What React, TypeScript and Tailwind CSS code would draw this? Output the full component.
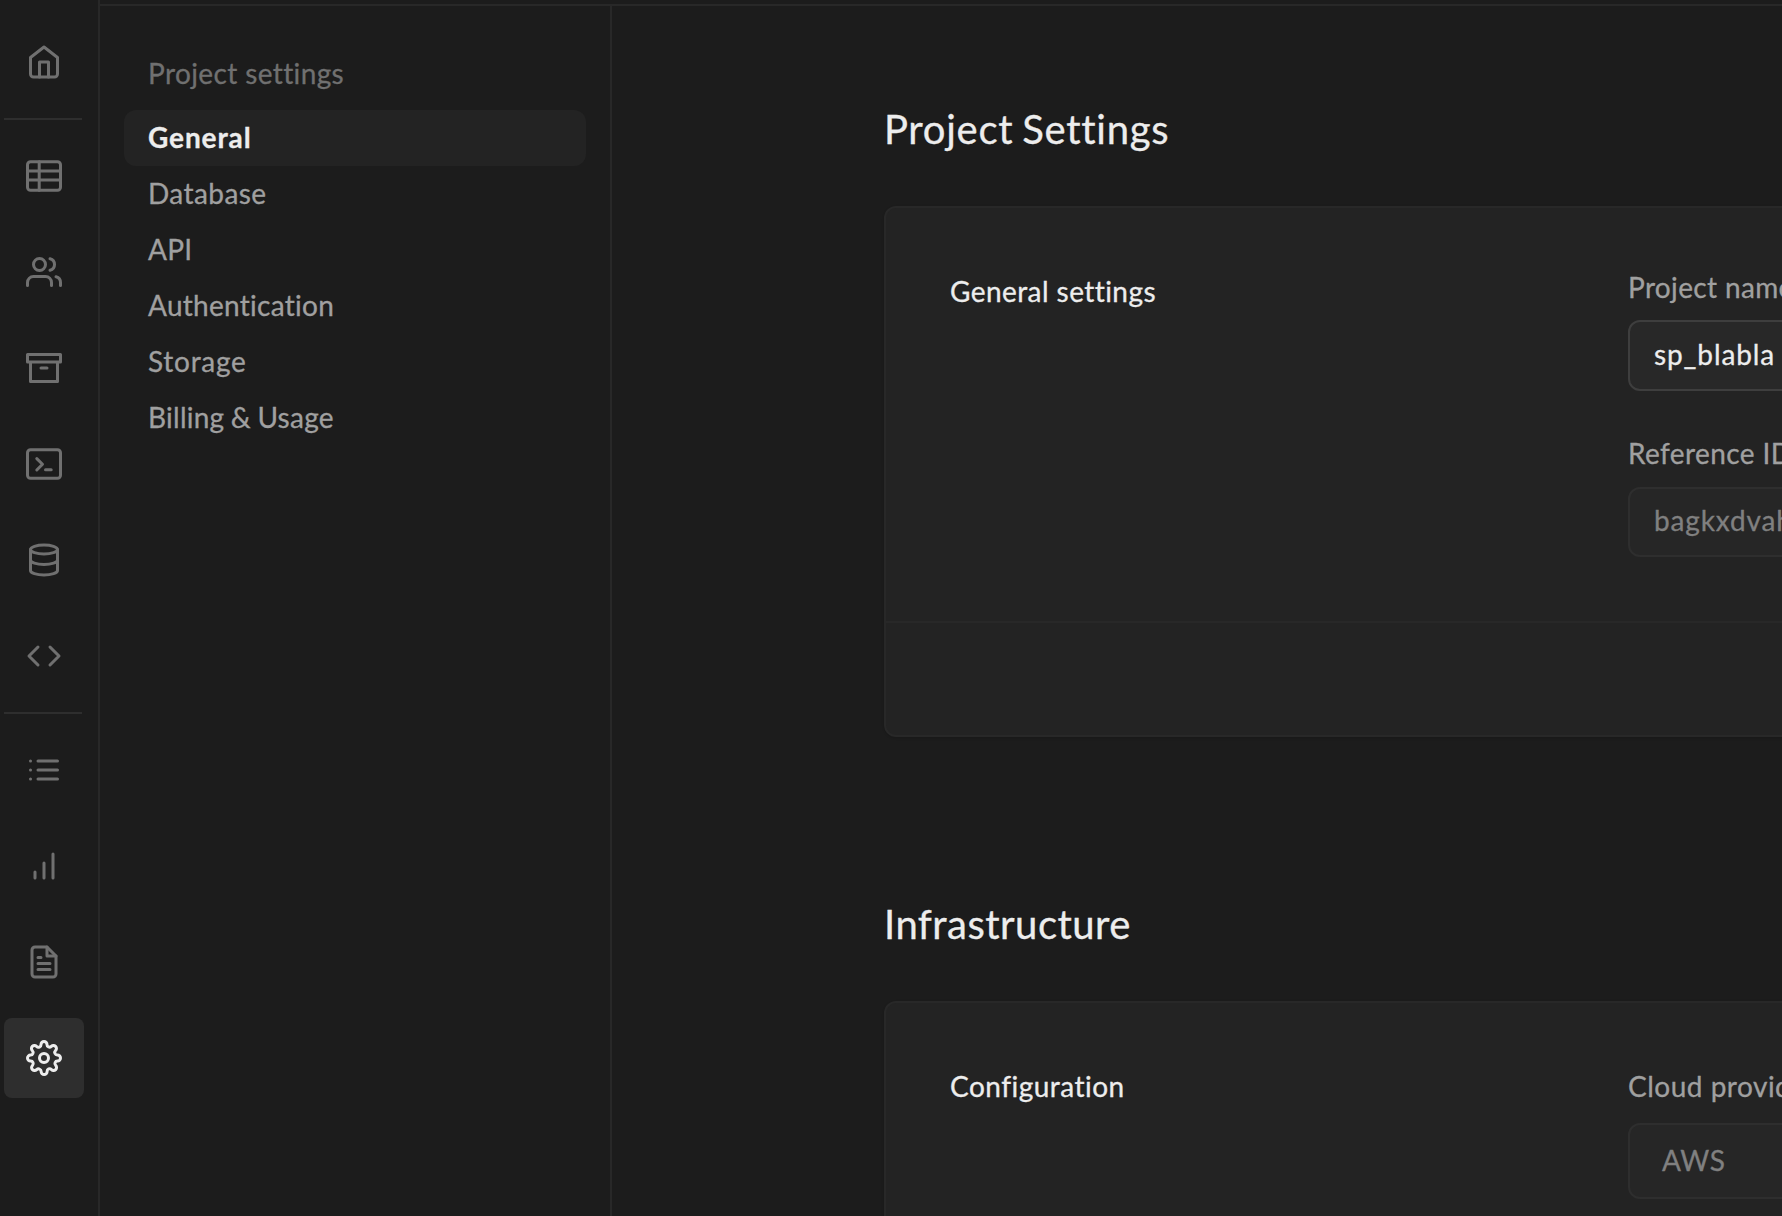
import React from "react";

function Glyph({ children }: { children: React.ReactNode }) {
  return (
    <svg className="size-9" viewBox="0 0 24 24" fill="none" stroke="currentColor" strokeWidth="2" strokeLinecap="round" strokeLinejoin="round">
      {children}
    </svg>
  );
}

function RailItem({ active, children }: { active?: boolean; children: React.ReactNode }) {
  return (
    <a className={active ? "flex size-20 shrink-0 items-center justify-center rounded-lg bg-[#2e2e2e] text-[#ededed]" : "flex size-20 shrink-0 items-center justify-center text-[#707070]"}>
      <Glyph>{children}</Glyph>
    </a>
  );
}

function Rail() {
  return (
    <nav className="flex w-[100px] shrink-0 flex-col border-r-2 border-[#282828] pl-1 pt-[22px]">
      <RailItem>
        <path d="M3 9l9-7 9 7v11a2 2 0 0 1-2 2H5a2 2 0 0 1-2-2z" />
        <path d="M9 22V12h6v10" />
      </RailItem>
      <div className="my-4 h-0.5 w-[78px] shrink-0 bg-[#2e2e2e]" />
      <div className="flex flex-col gap-4">
        <RailItem>
          <rect x="1" y="2.5" width="22" height="19" rx="2" />
          <path d="M1 8.7h22M1 14.7h22M8.8 2.5v19" />
        </RailItem>
        <RailItem>
          <path d="M17 21v-2a4 4 0 0 0-4-4H5a4 4 0 0 0-4 4v2" />
          <circle cx="9" cy="7" r="4" />
          <path d="M23 21v-2a4 4 0 0 0-3-3.87M16 3.13a4 4 0 0 1 0 7.75" />
        </RailItem>
        <RailItem>
          <path d="M21 8v13H3V8M1 3h22v5H1zM10 12h4" />
        </RailItem>
        <RailItem>
          <rect x="1" y="2.5" width="22" height="19" rx="2" />
          <path d="M7.2 8.4l3.8 3.8-3.8 3.8M13 15.8h3.8" />
        </RailItem>
        <RailItem>
          <ellipse cx="12" cy="5" rx="9" ry="3" />
          <path d="M21 12c0 1.66-4 3-9 3s-9-1.34-9-3" />
          <path d="M3 5v14c0 1.66 4 3 9 3s9-1.34 9-3V5" />
        </RailItem>
        <RailItem>
          <path d="M16 18l6-6-6-6M8 6l-6 6 6 6" />
        </RailItem>
      </div>
      <div className="my-4 h-0.5 w-[78px] shrink-0 bg-[#2e2e2e]" />
      <div className="flex flex-col gap-4">
        <RailItem>
          <path d="M8 6h13M8 12h13M8 18h13M3 6h.01M3 12h.01M3 18h.01" />
        </RailItem>
        <RailItem>
          <path d="M18 20V4M12 20V10M6 20v-4" />
        </RailItem>
        <RailItem>
          <path d="M14 2H6a2 2 0 0 0-2 2v16a2 2 0 0 0 2 2h12a2 2 0 0 0 2-2V8z" />
          <path d="M14 2v6h6M16 13H8M16 17H8M10 9H8" />
        </RailItem>
        <RailItem active>
          <circle cx="12" cy="12" r="3" />
          <path d="M19.4 15a1.65 1.65 0 0 0 .33 1.82l.06.06a2 2 0 0 1 0 2.83 2 2 0 0 1-2.83 0l-.06-.06a1.65 1.65 0 0 0-1.82-.33 1.65 1.65 0 0 0-1 1.51V21a2 2 0 0 1-2 2 2 2 0 0 1-2-2v-.09A1.65 1.65 0 0 0 9 19.4a1.65 1.65 0 0 0-1.82.33l-.06.06a2 2 0 0 1-2.83 0 2 2 0 0 1 0-2.83l.06-.06a1.65 1.65 0 0 0 .33-1.82 1.65 1.65 0 0 0-1.51-1H3a2 2 0 0 1-2-2 2 2 0 0 1 2-2h.09A1.65 1.65 0 0 0 4.6 9a1.65 1.65 0 0 0-.33-1.82l-.06-.06a2 2 0 0 1 0-2.83 2 2 0 0 1 2.83 0l.06.06a1.65 1.65 0 0 0 1.82.33H9a1.65 1.65 0 0 0 1-1.51V3a2 2 0 0 1 2-2 2 2 0 0 1 2 2v.09a1.65 1.65 0 0 0 1 1.51 1.65 1.65 0 0 0 1.82-.33l.06-.06a2 2 0 0 1 2.83 0 2 2 0 0 1 0 2.83l-.06.06a1.65 1.65 0 0 0-.33 1.82V9a1.65 1.65 0 0 0 1.51 1H21a2 2 0 0 1 2 2 2 2 0 0 1-2 2h-.09a1.65 1.65 0 0 0-1.51 1z" />
        </RailItem>
      </div>
    </nav>
  );
}

const links = [
  { label: "Database", spacing: "tracking-[0.42px]" },
  { label: "API", spacing: "tracking-[0.2px]" },
  { label: "Authentication", spacing: "tracking-[0.28px]" },
  { label: "Storage", spacing: "tracking-[0.75px]" },
  { label: "Billing & Usage", spacing: "tracking-[0.25px] [word-spacing:-1px]" },
];

function SettingsMenu() {
  return (
    <aside className="w-[512px] shrink-0 border-r-2 border-[#282828] px-6 pt-[47px]">
      <h2 className="h-[57px] px-6 leading-10 tracking-[0.38px] text-[#707070]">Project settings</h2>
      <ul>
        <li className="flex h-14 items-center rounded-xl bg-[#232323] px-6 pb-[3px] font-bold tracking-[0.9px] text-[#ededed]">General</li>
        {links.map((link) => (
          <li key={link.label} className="flex h-14 items-center px-6 pb-[3px] text-[#a0a0a0]">
            <span className={link.spacing}>{link.label}</span>
          </li>
        ))}
      </ul>
    </aside>
  );
}

export default function App() {
  return (
    <div className="flex h-[1216px] w-[1782px] overflow-hidden whitespace-nowrap bg-[#1c1c1c] font-['Lato',sans-serif] text-[28px] [-webkit-text-stroke:0.3px]">
      <Rail />
      <div className="flex min-w-0 flex-1 flex-col">
        <div className="h-1.5 shrink-0 border-b-2 border-[#282828]" />
        <div className="flex min-h-0 flex-1">
          <SettingsMenu />
          <main className="min-w-0 flex-1 overflow-hidden pl-[272px] pt-[93px] text-[#ededed]">
            <h1 className="h-[107px] text-[40px] leading-[60px] tracking-[0.72px] [word-spacing:-2px]">Project Settings</h1>
            <section className="h-[531px] w-[1200px] rounded-xl border-2 border-[#282828] bg-[#232323] shadow">
              <div className="flex h-[415px] border-b-2 border-[#282828] pl-16 pt-[59px]">
                <h3 className="w-[678px] pt-1 leading-10 tracking-[0.43px]">General settings</h3>
                <div className="w-[400px] text-[#a0a0a0]">
                  <label className="block leading-10 tracking-[0.35px]">Project name</label>
                  <div className="mt-[13px] flex h-[71px] items-center rounded-xl border-2 border-[#3e3e3e] bg-[#282828] pb-1 pl-6 tracking-[0.9px] text-[#ededed]">sp_blabla</div>
                  <label className="mt-[42px] block leading-10 tracking-[0.4px]">Reference ID</label>
                  <div className="mt-[14px] flex h-[70px] items-center rounded-xl border-2 border-[#2e2e2e] bg-[#262626] pb-[5px] pl-6 tracking-[0.85px] text-[#808080]">bagkxdvah</div>
                </div>
              </div>
            </section>
            <h1 className="mt-[157px] h-[107px] text-[40px] leading-[60px] tracking-[0.48px]">Infrastructure</h1>
            <section className="h-[400px] w-[1200px] rounded-xl border-2 border-[#282828] bg-[#232323] shadow">
              <div className="flex pl-16 pt-[63px]">
                <h3 className="w-[678px] leading-10 tracking-[0.48px]">Configuration</h3>
                <div className="w-[400px] text-[#a0a0a0]">
                  <label className="block leading-10 tracking-[0.5px]">Cloud provider</label>
                  <div className="mt-[17px] flex h-[76px] items-center rounded-xl border-2 border-[#2e2e2e] bg-[#262626] pb-0.5 pl-8 tracking-[0.6px] text-[#808080]">AWS</div>
                </div>
              </div>
            </section>
          </main>
        </div>
      </div>
    </div>
  );
}
